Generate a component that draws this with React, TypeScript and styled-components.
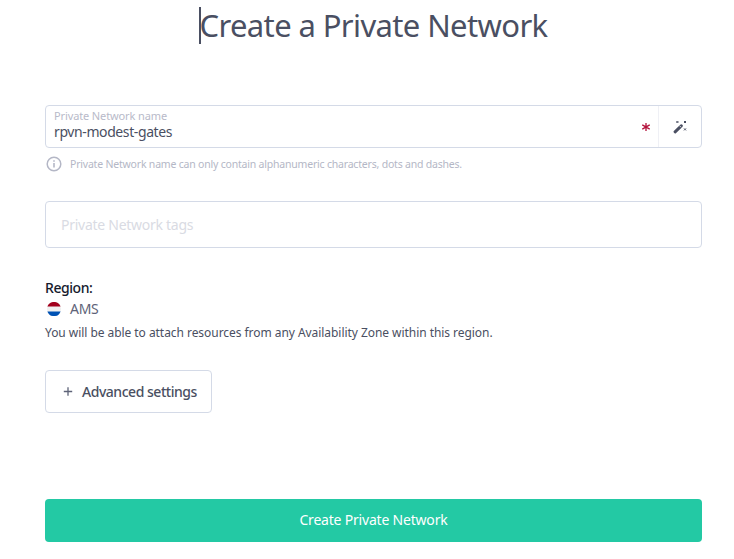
import React from "react";
import styled, { createGlobalStyle } from "styled-components";

const Global = createGlobalStyle`
  * { box-sizing: border-box; }
  body {
    margin: 0;
    background: #fff;
    color: #4a4f62;
    font-family: "Noto Sans", "Open Sans", sans-serif;
    font-size: 14px;
  }
  button, input { font: inherit; color: inherit; margin: 0; }
  svg { display: block; flex: none; }
`;

const Page = styled.main`
  display: flex;
  flex-direction: column;
  height: 559px;
  padding: 7px 32px 17px 45px;
  overflow: hidden;
`;

const TitleBar = styled.header`
  display: flex;
  justify-content: center;
  height: 37px;
  margin-bottom: 61px;
`;

const Title = styled.h1`
  margin: 0;
  height: 37px;
  border-left: 2px solid #4a4f62;
  font-size: 31px;
  font-weight: 400;
  line-height: 36px;
  letter-spacing: -0.62px;
  white-space: nowrap;
  text-indent: -2px;
`;

const NameField = styled.div`
  display: flex;
  flex: none;
  height: 43px;
  border: 1px solid #d4dae7;
  border-radius: 4px;
`;

const NameBody = styled.label`
  display: flex;
  flex: 1;
  flex-direction: column;
  padding: 2px 8px 0;
`;

const NameLabel = styled.span`
  color: #b8bac9;
  font-size: 11px;
  line-height: 15px;
  letter-spacing: -0.12px;
`;

const NameInput = styled.input`
  width: 100%;
  height: 19px;
  margin-top: -1px;
  padding: 0;
  border: 0;
  outline: 0;
  background: transparent;
  line-height: 19px;
  letter-spacing: -0.4px;
`;

const Required = styled.div`
  display: flex;
  align-items: center;
  padding-right: 8px;
`;

const WandButton = styled.button`
  display: flex;
  align-items: center;
  justify-content: center;
  width: 43px;
  padding: 0;
  border: 0;
  border-left: 1px solid #eff0f5;
  background: transparent;
`;

const Hint = styled.p`
  display: flex;
  flex: none;
  align-items: center;
  gap: 8px;
  height: 16px;
  margin: 8px 0 29px 1px;
  color: #b4b7c6;
  font-size: 10.5px;
  letter-spacing: -0.2px;
  white-space: nowrap;
`;

const TagsInput = styled.input`
  flex: none;
  width: 100%;
  height: 47px;
  padding: 0 15px;
  border: 1px solid #d4dae7;
  border-radius: 4px;
  outline: 0;
  background: #fff;
  letter-spacing: -0.27px;
  &::placeholder { color: #d9dbe3; opacity: 1; }
`;

const Region = styled.section`
  display: flex;
  flex: none;
  flex-direction: column;
  margin: 30px 0 27px;
`;

const RegionTitle = styled.h2`
  margin: 0;
  color: #151a2d;
  font-size: 14px;
  font-weight: 500;
  line-height: 20px;
  letter-spacing: -0.45px;
`;

const RegionValue = styled.div`
  display: flex;
  align-items: center;
  gap: 9px;
  height: 22px;
  padding-left: 2px;
  color: #5e6378;
  line-height: 20px;
  letter-spacing: -0.3px;
`;

const RegionNote = styled.p`
  margin: 3px 0 0;
  font-size: 12px;
  line-height: 20px;
  letter-spacing: -0.05px;
  white-space: nowrap;
`;

const AdvancedButton = styled.button`
  display: flex;
  flex: none;
  align-items: center;
  gap: 9px;
  width: 167px;
  height: 43px;
  padding: 0 0 0 17px;
  border: 1px solid #d4dae7;
  border-radius: 4px;
  background: #fff;
  font-weight: 500;
  letter-spacing: -0.47px;
  white-space: nowrap;
`;

const SubmitButton = styled.button`
  flex: none;
  height: 43px;
  margin-top: auto;
  padding: 0 0 2px;
  border: 0;
  border-radius: 4px;
  background: #23c9a4;
  color: #fff;
  letter-spacing: -0.2px;
`;

const Asterisk = () => (
  <svg width="8" height="8" viewBox="0 0 8 8" stroke="#b3123b" strokeWidth="1.3" fill="none">
    <path d="M4 0v8M.3 1.8l7.4 4.4M7.7 1.8L.3 6.2" />
  </svg>
);

const Wand = () => (
  <svg width="14" height="14" viewBox="0 0 14 14" fill="none">
    <path d="M2.1 11.8l6.2-6" stroke="#4a4f62" strokeWidth="3" strokeLinecap="round" />
    <path d="M6.5 5.7l1.6 1.6" stroke="#fff" strokeWidth=".8" />
    <path d="M3.4 1l2 2M5.4 1l-2 2M11 1l2 2M13 1l-2 2M11 8.4l2 2M13 8.4l-2 2" stroke="#4a4f62" strokeWidth="1" />
  </svg>
);

const Info = () => (
  <svg width="16" height="16" viewBox="0 0 16 16" fill="none" stroke="#b4b7c6" strokeWidth="1.5">
    <circle cx="8" cy="8" r="6.8" />
    <path d="M8 7v4.5M8 4.2v1.5" strokeWidth="1.6" />
  </svg>
);

const DutchFlag = () => (
  <svg width="14" height="14" viewBox="0 0 14 14">
    <circle cx="7" cy="7" r="7" fill="#f0f0f0" />
    <path d="M.4 4.6a7 7 0 0 1 13.2 0z" fill="#a2001d" />
    <path d="M.4 9.4a7 7 0 0 0 13.2 0z" fill="#0052b4" />
  </svg>
);

const Plus = () => (
  <svg width="10" height="10" viewBox="0 0 10 10" stroke="#5e6378" strokeWidth="1.3">
    <path d="M5 .3v8.4M.8 4.5h8.4" />
  </svg>
);

export default function App() {
  return (
    <>
      <Global />
      <Page>
        <TitleBar>
          <Title>Create a Private Network</Title>
        </TitleBar>
        <NameField>
          <NameBody>
            <NameLabel>Private Network name</NameLabel>
            <NameInput defaultValue="rpvn-modest-gates" spellCheck={false} />
          </NameBody>
          <Required><Asterisk /></Required>
          <WandButton type="button" aria-label="Generate a name"><Wand /></WandButton>
        </NameField>
        <Hint>
          <Info />
          Private Network name can only contain alphanumeric characters, dots and dashes.
        </Hint>
        <TagsInput placeholder="Private Network tags" />
        <Region>
          <RegionTitle>Region:</RegionTitle>
          <RegionValue><DutchFlag />AMS</RegionValue>
          <RegionNote>
            You will be able to attach resources from any Availability Zone within this region.
          </RegionNote>
        </Region>
        <AdvancedButton type="button"><Plus />Advanced settings</AdvancedButton>
        <SubmitButton type="button">Create Private Network</SubmitButton>
      </Page>
    </>
  );
}
